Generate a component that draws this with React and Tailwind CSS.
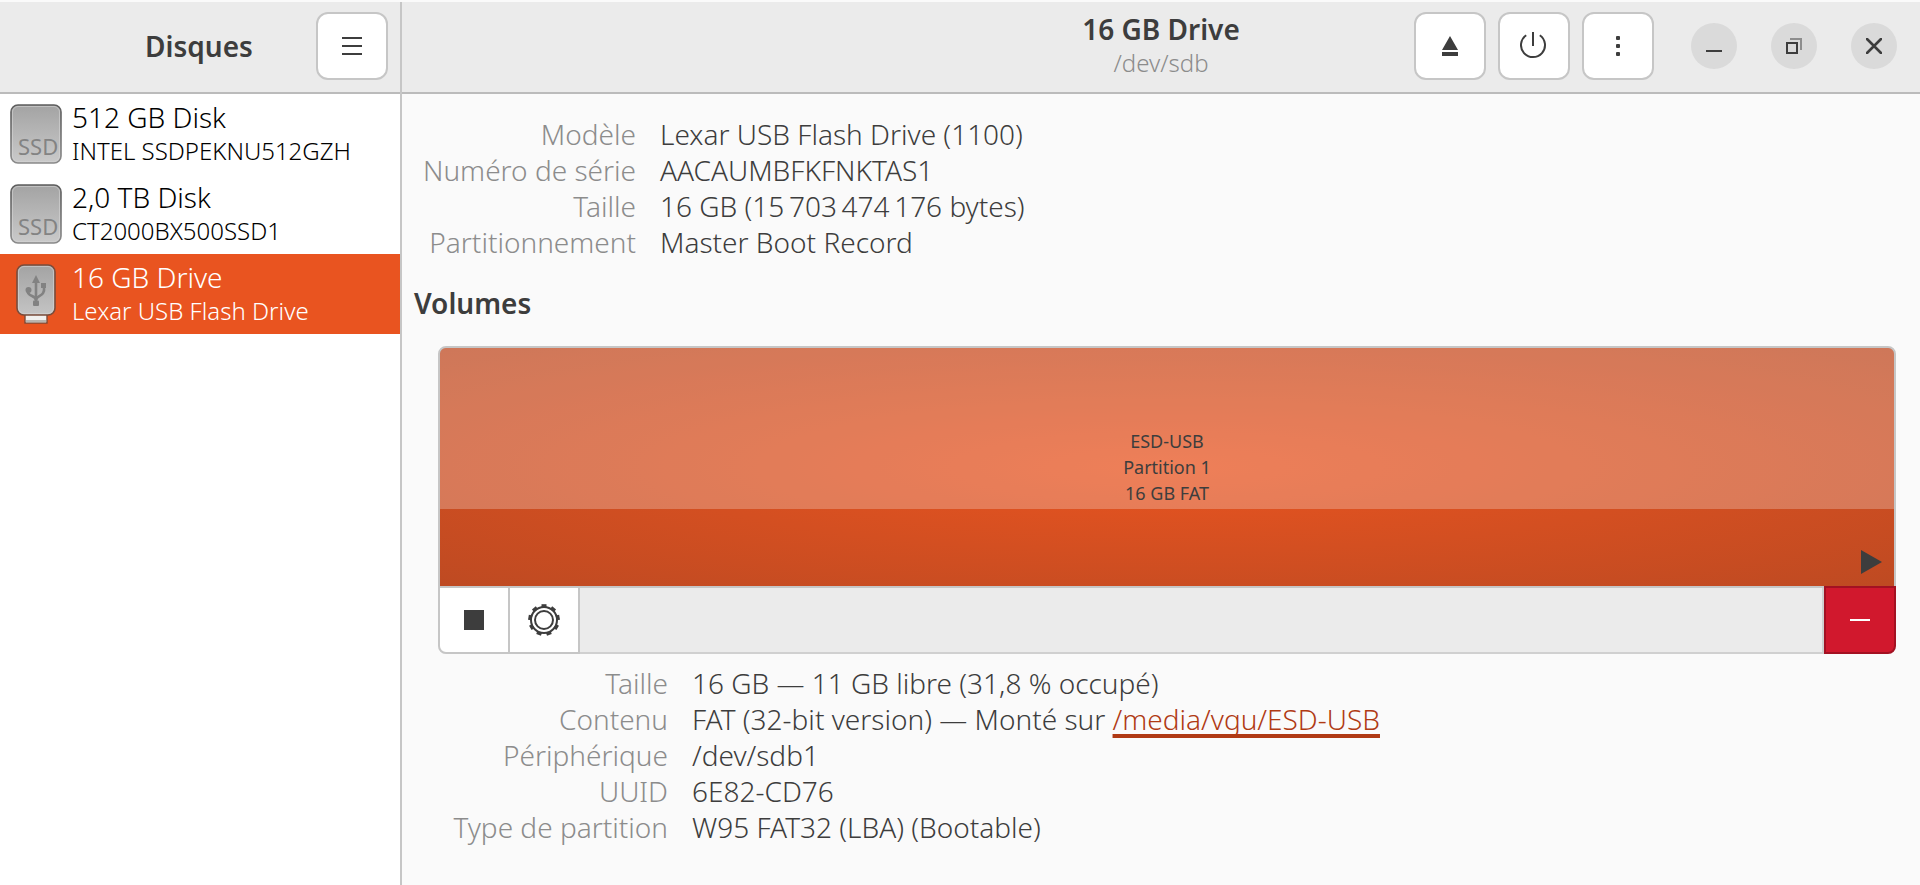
import React, { useState } from "react";

const drives = [
  { name: "512 GB Disk", model: "INTEL SSDPEKNU512GZH", type: "ssd" },
  { name: "2,0 TB Disk", model: "CT2000BX500SSD1", type: "ssd" },
  { name: "16 GB Drive", model: "Lexar USB Flash Drive", type: "usb" },
];

const driveDetails = [
  { label: "Modèle", value: "Lexar USB Flash Drive (1100)" },
  { label: "Numéro de série", value: "AACAUMBFKFNKTAS1" },
  { label: "Taille", value: "16 GB (15\u2009703\u2009474\u2009176 bytes)" },
  { label: "Partitionnement", value: "Master Boot Record" },
];

const volumeDetails = [
  { label: "Taille", value: "16 GB — 11 GB libre (31,8 % occupé)" },
  { label: "Contenu", value: "FAT (32-bit version) — Monté sur ", link: "/media/vgu/ESD-USB" },
  { label: "Périphérique", value: "/dev/sdb1" },
  { label: "UUID", value: "6E82-CD76" },
  { label: "Type de partition", value: "W95 FAT32 (LBA) (Bootable)" },
];

function SsdIcon() {
  return (
    <svg width="52" height="60" viewBox="0 0 52 60" aria-hidden="true">
      <defs>
        <linearGradient id="ssdBody" x1="0" y1="0" x2="0" y2="1">
          <stop offset="0" stopColor="#a3a3a3" />
          <stop offset="1" stopColor="#cacaca" />
        </linearGradient>
        <linearGradient id="ssdEdge" x1="0" y1="0" x2="0" y2="1">
          <stop offset="0" stopColor="#5c5c5c" />
          <stop offset="1" stopColor="#8a8a8a" />
        </linearGradient>
      </defs>
      <rect x="1" y="1" width="50" height="58" rx="7" fill="url(#ssdBody)" stroke="url(#ssdEdge)" strokeWidth="1.6" />
      <rect x="2.5" y="2.5" width="47" height="55" rx="5.5" fill="none" stroke="#d6d6d6" strokeOpacity="0.6" />
      <text x="8" y="51" fontSize="22" fontWeight="400" fontFamily="Noto Sans, sans-serif" fill="#838383">
        SSD
      </text>
    </svg>
  );
}

function UsbIcon() {
  return (
    <svg width="52" height="60" viewBox="0 0 52 60" aria-hidden="true">
      <defs>
        <linearGradient id="usbBody" x1="0" y1="0" x2="0" y2="1">
          <stop offset="0" stopColor="#a3a3a3" />
          <stop offset="1" stopColor="#c4c4c4" />
        </linearGradient>
      </defs>
      <rect x="15" y="49" width="22" height="10" fill="#f1f0ee" stroke="#7d4a38" strokeWidth="1.4" />
      <rect x="16" y="56" width="20" height="2.4" fill="#b9b5b0" />
      <rect x="7" y="1" width="38" height="50" rx="7" fill="url(#usbBody)" stroke="#7a4c3b" strokeWidth="1.6" />
      <rect x="8.5" y="2.5" width="35" height="47" rx="5.5" fill="none" stroke="#d6d6d6" strokeOpacity="0.6" />
      <g fill="none" stroke="#828282" strokeWidth="2.6">
        <path d="M26 38V17" />
        <path d="M26 36C26 31 35.5 33 34 23" />
        <path d="M26 36C26 31 16.5 33 17.5 26" />
      </g>
      <path d="M26 11l4 8h-8z" fill="#828282" />
      <rect x="31" y="19" width="5" height="5" fill="#828282" />
      <circle cx="18.5" cy="26" r="3" fill="#828282" />
      <rect x="23" y="36.5" width="6" height="5.5" rx="1" fill="#828282" />
    </svg>
  );
}

function GearIcon() {
  const teeth = [0, 40, 80, 120, 160, 200, 240, 280, 320];
  return (
    <svg width="32" height="32" viewBox="0 0 32 32" aria-hidden="true">
      <circle cx="16" cy="16" r="13" fill="none" stroke="#3d3d3d" strokeWidth="2" />
      <circle cx="16" cy="16" r="9" fill="none" stroke="#3d3d3d" strokeWidth="2" />
      {teeth.map((angle) => (
        <rect key={angle} x="13.5" y="0.2" width="5" height="3.4" fill="#3d3d3d" transform={`rotate(${angle} 16 16)`} />
      ))}
    </svg>
  );
}

function HeaderButton({ label, children }) {
  return (
    <button
      aria-label={label}
      className="flex h-[68px] w-[72px] items-center justify-center rounded-xl border-2 border-[#c6c6c6] bg-white hover:bg-gray-50"
    >
      {children}
    </button>
  );
}

function WindowButton({ label, children }) {
  return (
    <button
      aria-label={label}
      className="flex h-[46px] w-[46px] items-center justify-center rounded-full bg-[#dadada] hover:bg-[#cfcfcf]"
    >
      {children}
    </button>
  );
}

function DetailRow({ row }) {
  return (
    <>
      <dt className="text-right text-[#8c8c8c]">{row.label}</dt>
      <dd>
        {row.value}
        {row.link && (
          <a
            href="#media"
            className="text-[#b03a14] underline decoration-4 underline-offset-4 [text-decoration-skip-ink:none]"
          >
            {row.link}
          </a>
        )}
      </dd>
    </>
  );
}

export default function App() {
  const [selected, setSelected] = useState(2);

  return (
    <div className="flex min-h-screen bg-[#fafafa] pt-0.5 font-['Noto_Sans',sans-serif] text-[28px] leading-9 font-light text-[#3d3d3d]">
      <aside className="flex w-[402px] shrink-0 flex-col border-r-2 border-[#c6c6c6] bg-white">
        <header className="grid h-[92px] grid-cols-[1fr_auto_1fr] items-center border-b-2 border-[#bbbbbb] bg-[#ebebeb] pr-3 pb-0.5">
          <h1 className="col-start-2 pl-2.5 font-semibold">Disques</h1>
          <div className="flex justify-end">
            <HeaderButton label="Menu">
              <svg width="20" height="18" viewBox="0 0 20 18" aria-hidden="true">
                <path d="M0 1h20M0 9h20M0 17h20" stroke="#3d3d3d" strokeWidth="2" />
              </svg>
            </HeaderButton>
          </div>
        </header>
        <nav className="flex flex-col">
          {drives.map((drive, idx) => (
            <button
              key={drive.name}
              onClick={() => setSelected(idx)}
              className={
                idx === selected
                  ? "flex h-20 items-center gap-2.5 bg-[#e95420] px-2.5 text-left text-white"
                  : "flex h-20 items-center gap-2.5 px-2.5 text-left text-black"
              }
            >
              {drive.type === "ssd" ? <SsdIcon /> : <UsbIcon />}
              <span className="flex flex-col pb-0.5">
                <span>{drive.name}</span>
                <span className="text-2xl leading-8">{drive.model}</span>
              </span>
            </button>
          ))}
        </nav>
      </aside>

      <main className="flex min-w-0 flex-1 flex-col">
        <header className="grid h-[92px] grid-cols-[1fr_auto_1fr] items-center border-b-2 border-[#bbbbbb] bg-[#ebebeb] pb-0.5">
          <div className="col-start-2 text-center">
            <h2 className="leading-[34px] font-semibold">16 GB Drive</h2>
            <p className="text-2xl leading-[34px] text-[#8c8c8c]">/dev/sdb</p>
          </div>
          <div className="flex items-center justify-end gap-[37px] pr-[23px]">
            <div className="flex gap-3">
              <HeaderButton label="Éjecter">
                <svg width="16" height="20" viewBox="0 0 16 20" fill="#3d3d3d" aria-hidden="true">
                  <path d="M8 0l8 14H0zM0 16h16v4H0z" />
                </svg>
              </HeaderButton>
              <HeaderButton label="Éteindre">
                <svg width="28" height="28" viewBox="0 0 28 28" fill="none" stroke="#3d3d3d" strokeWidth="2" aria-hidden="true">
                  <path d="M13 0v14M6.2 3.2A12 12 0 1 0 19.8 3.2" />
                </svg>
              </HeaderButton>
              <HeaderButton label="Options du disque">
                <svg width="4" height="20" viewBox="0 0 4 20" fill="#3d3d3d" aria-hidden="true">
                  <rect width="4" height="4" rx="1" />
                  <rect y="8" width="4" height="4" rx="1" />
                  <rect y="16" width="4" height="4" rx="1" />
                </svg>
              </HeaderButton>
            </div>
            <div className="flex gap-[34px]">
              <WindowButton label="Réduire">
                <svg width="16" height="16" viewBox="0 0 16 16" aria-hidden="true">
                  <path d="M0 13h16" stroke="#3d3d3d" strokeWidth="2" />
                </svg>
              </WindowButton>
              <WindowButton label="Restaurer">
                <svg width="16" height="16" viewBox="0 0 16 16" fill="none" strokeWidth="2" aria-hidden="true">
                  <path d="M4 1h11v11" stroke="#8d8d8d" />
                  <rect x="1" y="5" width="10" height="10" stroke="#3d3d3d" />
                </svg>
              </WindowButton>
              <WindowButton label="Fermer">
                <svg width="16" height="16" viewBox="0 0 16 16" aria-hidden="true">
                  <path d="M1 1l14 14M15 1L1 15" stroke="#3d3d3d" strokeWidth="2.6" strokeLinecap="round" />
                </svg>
              </WindowButton>
            </div>
          </div>
        </header>

        <div className="pt-[22px] pr-6 pb-6 pl-3">
          <dl className="grid grid-cols-[222px_1fr] gap-x-6">
            {driveDetails.map((row) => (
              <DetailRow key={row.label} row={row} />
            ))}
          </dl>

          <h3 className="mt-[25px] font-semibold">Volumes</h3>

          <section className="mt-[25px] ml-6">
            <div className="relative flex h-[242px] flex-col overflow-hidden rounded-t-lg border-2 border-[#c6c6c6] bg-[radial-gradient(ellipse_farthest-corner_at_center,#e95420,#be4a22)]">
              {/* free space on the partition */}
              <div className="h-[161px] bg-white/25" />
              <div className="absolute inset-0 flex flex-col items-center justify-center text-center text-[18px] leading-[26px] font-normal">
                <span>ESD-USB</span>
                <span>Partition 1</span>
                <span>16 GB FAT</span>
              </div>
              <svg className="absolute right-3 bottom-3" width="21" height="24" viewBox="0 0 21 24" fill="#3d3d3d" aria-hidden="true">
                <path d="M0 0l21 12L0 24z" />
              </svg>
            </div>
            <div className="-mt-0.5 flex h-[68px] rounded-b-lg bg-[#ebebeb]">
              <button
                aria-label="Démonter la partition"
                className="flex w-[72px] items-center justify-center rounded-bl-lg border-2 border-[#c6c6c6] bg-white"
              >
                <span className="h-5 w-5 bg-[#3d3d3d]" />
              </button>
              <button
                aria-label="Options de partition"
                className="flex w-[70px] items-center justify-center border-y-2 border-r-2 border-[#c6c6c6] bg-white"
              >
                <GearIcon />
              </button>
              <div className="flex-1 border-t-2 border-r-2 border-b-2 border-t-[#c6c6c6] border-r-[#d0d0d0] border-b-[#d0d0d0]" />
              <button
                aria-label="Supprimer la partition"
                className="relative flex w-[72px] items-center justify-center rounded-br-lg border-2 border-[#a31122] bg-[#d1182d]"
              >
                <span className="h-0.5 w-5 bg-white" />
              </button>
            </div>

            <dl className="mt-[11px] grid grid-cols-[230px_1fr] gap-x-6">
              {volumeDetails.map((row) => (
                <DetailRow key={row.label} row={row} />
              ))}
            </dl>
          </section>
        </div>
      </main>
    </div>
  );
}
